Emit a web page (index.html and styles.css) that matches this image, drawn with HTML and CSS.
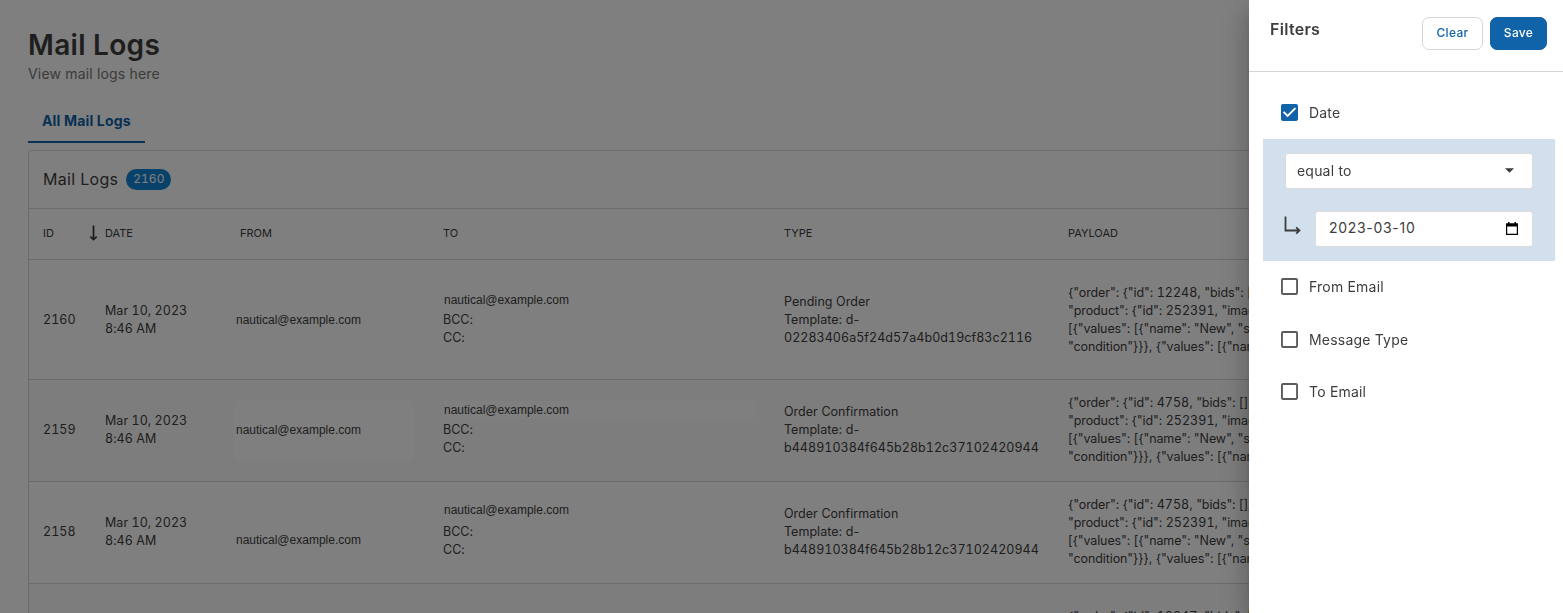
FILE: index.html
```html
<!DOCTYPE html>
<html lang="en">
<head>
<meta charset="utf-8">
<title>Mail Logs</title>
<link rel="stylesheet" href="styles.css">
</head>

<body>
<main class="page">
	<h1 class="title">Mail Logs</h1>
	<p class="subtitle">View mail logs here</p>
	<nav class="tabs">
		<a class="tab">All Mail Logs</a>
	</nav>

	<section class="card">
		<div class="card-head">
			<h2>Mail Logs</h2>
			<span class="badge">2160</span>
		</div>
		<div class="row row-head">
			<div class="sorted">ID
				<svg width="9" height="16" viewBox="0 0 9 16"><path d="M4.5 0.5V14M1.3 11.6L4.5 14.6L7.7 11.6" fill="none" stroke="currentColor" stroke-width="1.8"/></svg>
			</div>
			<div>DATE</div>
			<div>FROM</div>
			<div>TO</div>
			<div>TYPE</div>
			<div>PAYLOAD</div>
		</div>
		<div class="row tall">
			<div class="num">2160</div>
			<div class="num">Mar 10, 2023<br>8:46 AM</div>
			<div><div class="email from">nautical@example.com</div></div>
			<div><div class="email">nautical@example.com</div>BCC:<br>CC:</div>
			<div>Pending Order<br>Template: d-<br><span class="num">02283406a5f24d57a4b0d19cf83c2116</span></div>
			<div class="payload">{"order": {"id": <span class="num">12248</span>, "bids": [],<br>"product": {"id": <span class="num">252391</span>, "image":<br>[{"values": [{"name": "New", "slug":<br>"condition"}}}, {"values": [{"name":</div>
		</div>
		<div class="row striped">
			<div class="num">2159</div>
			<div class="num">Mar 10, 2023<br>8:46 AM</div>
			<div><div class="email from boxed">nautical@example.com</div></div>
			<div><div class="email wide">nautical@example.com</div>BCC:<br>CC:</div>
			<div>Order Confirmation<br>Template: d-<br><span class="num">b448910384f645b28b12c37102420944</span></div>
			<div class="payload">{"order": {"id": <span class="num">4758</span>, "bids": [],<br>"product": {"id": <span class="num">252391</span>, "image":<br>[{"values": [{"name": "New", "slug":<br>"condition"}}}, {"values": [{"name":</div>
		</div>
		<div class="row">
			<div class="num">2158</div>
			<div class="num">Mar 10, 2023<br>8:46 AM</div>
			<div><div class="email from low">nautical@example.com</div></div>
			<div><div class="email raised">nautical@example.com</div>BCC:<br>CC:</div>
			<div>Order Confirmation<br>Template: d-<br><span class="num">b448910384f645b28b12c37102420944</span></div>
			<div class="payload">{"order": {"id": <span class="num">4758</span>, "bids": [],<br>"product": {"id": <span class="num">252391</span>, "image":<br>[{"values": [{"name": "New", "slug":<br>"condition"}}}, {"values": [{"name":</div>
		</div>
		<div class="row tall striped">
			<div></div>
			<div></div>
			<div></div>
			<div></div>
			<div></div>
			<div class="payload">{"order": {"id": <span class="num">12247</span>, "bids": [],<br>"product": {"id": <span class="num">252391</span>, "image":<br>[{"values": [{"name": "New", "slug":<br>"condition"}}}, {"values": [{"name":</div>
		</div>
	</section>
</main>

<div class="backdrop"></div>

<aside class="drawer">
	<header class="drawer-head">
		<h3>Filters</h3>
		<button class="btn">Clear</button>
		<button class="btn btn-primary">Save</button>
	</header>

	<div class="filters">
		<label class="filter">
			<svg class="check on" viewBox="3 3 18 18"><path d="M19 3H5c-1.11 0-2 .9-2 2v14c0 1.1.89 2 2 2h14c1.11 0 2-.9 2-2V5c0-1.1-.89-2-2-2zm-9 14l-5-5 1.41-1.41L10 14.17l7.59-7.59L19 8l-9 9z"/></svg>
			<span>Date</span>
		</label>
		<div class="filter-body">
			<div class="field">
				<span>equal to</span>
				<svg class="caret" width="9" height="5" viewBox="0 0 10 5"><path d="M0 0h10L5 5z"/></svg>
			</div>
			<div class="sub">
				<svg class="elbow" width="18" height="19" viewBox="0 0 18 19"><path d="M1.5 0.5V14.5H15.5M12.2 11.3L15.5 14.5L12.2 17.7" fill="none" stroke="#3d3d3d" stroke-width="1.8"/></svg>
				<div class="field date">
					<span>2023-03-10</span>
					<svg width="12" height="13" viewBox="0 0 12 13"><path d="M2 0h1.4v1.2h5.2V0H10v1.2h2V13H0V1.2h2zM1.2 4.4v7.4h9.6V4.4z" fill-rule="evenodd"/></svg>
				</div>
			</div>
		</div>
		<label class="filter">
			<svg class="check" viewBox="3 3 18 18"><path d="M19 5v14H5V5h14m0-2H5c-1.1 0-2 .9-2 2v14c0 1.1.9 2 2 2h14c1.1 0 2-.9 2-2V5c0-1.1-.9-2-2-2z"/></svg>
			<span>From Email</span>
		</label>
		<label class="filter">
			<svg class="check" viewBox="3 3 18 18"><path d="M19 5v14H5V5h14m0-2H5c-1.1 0-2 .9-2 2v14c0 1.1.9 2 2 2h14c1.1 0 2-.9 2-2V5c0-1.1-.9-2-2-2z"/></svg>
			<span>Message Type</span>
		</label>
		<label class="filter">
			<svg class="check" viewBox="3 3 18 18"><path d="M19 5v14H5V5h14m0-2H5c-1.1 0-2 .9-2 2v14c0 1.1.9 2 2 2h14c1.1 0 2-.9 2-2V5c0-1.1-.9-2-2-2z"/></svg>
			<span>To Email</span>
		</label>
	</div>
</aside>
</body>
</html>
```
FILE: styles.css
```css
* {
	box-sizing: border-box;
}

body {
	margin: 0;
	height: 613px;
	overflow: hidden;
	background: #fefefe;
	color: #3d3d3d;
	font-family: Inter, "Liberation Sans", sans-serif;
	font-size: 12.5px;
	line-height: 18px;
}

h1, h2, h3, p {
	margin: 0;
}

.page {
	height: 613px;
	overflow: hidden;
	padding: 28px 0 0 28px;
}

.title {
	font-size: 28px;
	font-weight: 600;
	line-height: 34px;
	letter-spacing: 0.3px;
}

.subtitle {
	margin-top: 2px;
	font-size: 14px;
	line-height: 20px;
	letter-spacing: 0.17px;
	color: #777;
}

.tabs {
	display: flex;
	margin-top: 16px;
}

.tab {
	height: 43px;
	padding: 11px 14px 0;
	border-bottom: 2px solid #1063a9;
	color: #1063a9;
	font-size: 14px;
	font-weight: 700;
	line-height: 20px;
	letter-spacing: 0.16px;
}

.card {
	width: 1600px;
	margin-top: 7px;
	border: 1px solid #d6d6d6;
	border-radius: 4px;
	background: #fff;
}

.card-head {
	display: flex;
	align-items: center;
	gap: 8px;
	height: 57px;
	padding-left: 14px;
}

.card-head h2 {
	padding-bottom: 2px;
	font-size: 16px;
	font-weight: 400;
	letter-spacing: 0.3px;
}

.badge {
	height: 21px;
	padding: 0 7px;
	border-radius: 11px;
	background: #1183d2;
	color: #fff;
	font-size: 12px;
	font-variant-numeric: tabular-nums;
	line-height: 20px;
	letter-spacing: 0;
}

.row {
	display: grid;
	grid-template-columns: 62px 135px 203px 341px 284px 1fr;
	align-items: center;
	height: 102px;
	padding: 0 0 1px 14px;
	border-top: 1px solid #d6d6d6;
	letter-spacing: 0.03px;
}

.row-head {
	height: 51px;
	padding-bottom: 2px;
	font-size: 11px;
	font-weight: 400;
	letter-spacing: 0;
}

.tall {
	height: 120px;
	padding: 1px 0 0 14px;
}

.num {
	font-variant-numeric: tabular-nums;
	letter-spacing: 0.04px;
}

.striped {
	background: #fbfbfb;
}

.sorted {
	display: flex;
	align-items: center;
	justify-content: space-between;
	padding-right: 7px;
}

.payload {
	white-space: nowrap;
	letter-spacing: -0.1px;
}

.email {
	margin: -2px 0 2px 1px;
	font-family: "Liberation Sans", Arial, sans-serif;
	font-size: 12px;
	letter-spacing: 0;
}

.email.from {
	margin: 0 0 0 -4px;
}

.email.boxed {
	width: 180px;
	margin-left: -6px;
	padding: 21px 2px;
	border-radius: 6px;
	background: #fff;
}

.email.wide {
	width: 311px;
	background: #fff;
}

.email.from.low {
	margin-top: 16px;
}

.email.raised {
	margin: -4px 0 4px 1px;
}

.backdrop {
	position: fixed;
	inset: 0;
	background: rgba(0, 0, 0, 0.5);
}

.drawer {
	position: fixed;
	top: 0;
	right: 0;
	bottom: 0;
	width: 314px;
	background: #fff;
	box-shadow: 0 8px 10px -5px rgba(0, 0, 0, 0.2), 0 16px 24px 2px rgba(0, 0, 0, 0.14), 0 6px 30px 5px rgba(0, 0, 0, 0.12);
}

.drawer-head {
	display: flex;
	align-items: flex-start;
	gap: 7px;
	height: 72px;
	padding: 17px 16px 0 21px;
	border-bottom: 1px solid #d6d6d6;
}

.drawer-head h3 {
	flex: 1;
	font-size: 16px;
	font-weight: 600;
	line-height: 24px;
	letter-spacing: 0.3px;
}

.btn {
	width: 61px;
	height: 33px;
	padding: 0 0 2px;
	border: 1px solid #d6d6d6;
	border-radius: 7px;
	background: #fff;
	color: #1063a9;
	font-family: inherit;
	font-size: 12px;
	font-weight: 500;
	letter-spacing: 0.3px;
}

.btn-primary {
	width: 57px;
	border-color: #1063a9;
	background: #1063a9;
	color: #fff;
}

.filters {
	padding: 14px 8px 0 14px;
	font-size: 14px;
	letter-spacing: 0.2px;
}

.filter {
	display: flex;
	align-items: center;
	gap: 11px;
	height: 52.5px;
	padding-left: 18px;
}

.filter span {
	padding-top: 1px;
}

.check {
	width: 17px;
	height: 17px;
	fill: #5c5c5c;
}

.check.on {
	fill: #1063a9;
}

.filter-body {
	display: grid;
	gap: 22px;
	height: 122px;
	padding: 14px 22px;
	background: #d2dfec;
}

.field {
	display: flex;
	align-items: center;
	justify-content: space-between;
	height: 36px;
	padding: 0 18px 0 11px;
	border: 1px solid #dcdcdc;
	border-radius: 3px;
	background: #fff;
}

.caret {
	fill: #3d3d3d;
}

.sub {
	display: flex;
	gap: 13px;
}

.elbow {
	margin: 5px 0 0 -1px;
}

.date {
	flex: 1;
	padding: 0 14px 0 13px;
	letter-spacing: 0.7px;
}

.date span {
	padding-bottom: 1px;
}
```
